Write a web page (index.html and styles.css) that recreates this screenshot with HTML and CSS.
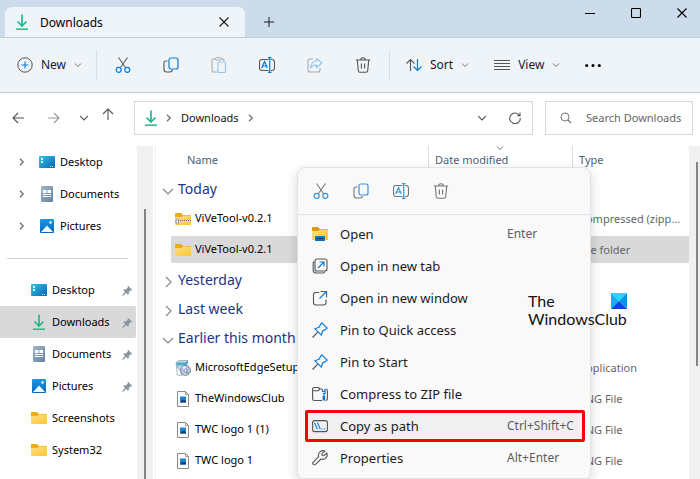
FILE: index.html
```html
<!DOCTYPE html>
<html lang="en">
<head>
<meta charset="utf-8">
<meta name="viewport" content="width=device-width, initial-scale=1">
<title>Downloads</title>
<link rel="stylesheet" href="styles.css">
</head>
<body>
<svg class="sprite" aria-hidden="true">
  <defs>
    <linearGradient id="g-desk" x1="0" y1="0" x2="1" y2="1"><stop offset="0" stop-color="#2cc9e2"/><stop offset="1" stop-color="#0a62bd"/></linearGradient>
    <linearGradient id="g-doc" x1="0" y1="0" x2="1" y2="1"><stop offset="0" stop-color="#a3b9cf"/><stop offset="1" stop-color="#647f9f"/></linearGradient>
    <linearGradient id="g-pic" x1="0" y1="0" x2="0" y2="1"><stop offset="0" stop-color="#1c97e5"/><stop offset="1" stop-color="#0767bd"/></linearGradient>
    <linearGradient id="g-fold" x1="0" y1="0" x2="1" y2="1"><stop offset="0" stop-color="#ffe08a"/><stop offset="1" stop-color="#fbc532"/></linearGradient>
    <symbol id="i-down" viewBox="0 0 16 16"><path d="M8 .5v11M3.500 7.500 8 12l4.500-4.500" fill="none" stroke="#22b78f" stroke-width="1.700"/><path d="M2 15.200h12" stroke="#2cc184" stroke-width="1.600"/></symbol>
    <symbol id="i-desktop" viewBox="0 0 16 16"><rect y="2" width="16" height="12" rx="1" fill="url(#g-desk)"/><path d="M2 4h2v2H2zM2 7h2v2H2z" fill="#e8fbff"/><path d="M11 12.500h1M13 12.500h1" stroke="#bfe6ff"/></symbol>
    <symbol id="i-doc" viewBox="0 0 16 16"><rect x="2" y="0" width="12" height="16" rx="1" fill="url(#g-doc)"/><path d="M4 4h3.500v3H4zM8.500 4H12v3H8.500zM4 8h8v1H4zM4 10h8v1H4z" fill="#fff"/></symbol>
    <symbol id="i-pic" viewBox="0 0 16 16"><rect x="1" y="1" width="14" height="14" rx="1" fill="url(#g-pic)"/><path d="M2 14 8 7.500l6 6.500z" fill="#f3faff"/><circle cx="11.500" cy="4.500" r="1.300" fill="#e8f6ff"/></symbol>
    <symbol id="i-folder" viewBox="0 0 16 16"><path d="M0 3q0-1 1-1h5l2 2h7q1 0 1 1v3H0z" fill="#eeac14"/><path d="M0 6h6.500l1.500-1.500h7q1 0 1 1V13q0 1-1 1H1q-1 0-1-1z" fill="url(#g-fold)"/></symbol>
    <symbol id="i-zip" viewBox="0 0 16 16"><use href="#i-folder"/><path d="M3 9.500h13" stroke="#636b70" stroke-width="1" stroke-dasharray="1 1"/><path d="M4 10.500h12" stroke="#dfe3e4" stroke-width="1" stroke-dasharray="1 1"/><rect x="1" y="8" width="2.500" height="5" rx="1" fill="#e4e7e8" stroke="#888" stroke-width=".8"/></symbol>
    <symbol id="i-open" viewBox="0 0 16 16"><path d="M0 2q0-1 1-1h5l2 2h7q1 0 1 1v3H0z" fill="#d99a0c"/><path d="M0 5h6.500L8 3.500h7q1 0 1 1V14H0z" fill="url(#g-fold)"/><path d="M3 15v-4q0-1 1-1h8q1 0 1 1v4z" fill="#0874c9"/><path d="M5 12.500h6" stroke="#053b72"/></symbol>
    <symbol id="i-png" viewBox="0 0 16 16"><path d="M2.500.5h8l3 3v12h-11z" fill="#fbfbfb" stroke="#8b8b8b"/><path d="M10.500.5v3h3" fill="none" stroke="#999"/><path d="M5 5.500h6v6H5z" fill="#2185cc"/><path d="m5 11.500 2.500-3 1 1 1-1 1.500 1.500v1.500z" fill="#113e75"/></symbol>
    <symbol id="i-setup" viewBox="0 0 16 16"><path d="M1 2.500 4 .5h9l-2 5.500L7 15 2.500 12z" fill="#c9d8e1" stroke="#7793a6" stroke-width=".6"/><path d="M1 2.500h9l3-2v3l-2 2H2z" fill="#4aaed0"/><path d="M2 6v9l5 .5-1-4z" fill="#f3f5f6" stroke="#788" stroke-width=".5"/><circle cx="10.500" cy="10.500" r="5" fill="#bec3e6" stroke="#5b6478" stroke-width=".7"/><path d="M10.500 10.500 7 7l3.500-1zM10.500 10.500l4 3-4 2z" fill="#f6f6ff"/><path d="m10.500 10.500 1 4.500 3-2z" fill="#69b772"/><circle cx="10.500" cy="10.500" r="1.500" fill="#fff" stroke="#5368bb" stroke-width=".8"/></symbol>
    <symbol id="i-pinned" viewBox="0 0 12 12"><path d="m6.800 1 4.200 4.200-.8.800-.8-.2-2 2 .1 1.800-1 1L4.600 8.800 1 12l-.9-.9L3.300 7.500 1.500 5.700l1-1 1.800.1 2-2-.3-1z" fill="#89959f"/></symbol>
    <symbol id="i-cut" viewBox="0 0 16 16"><path d="M3.500.5 10.800 11M12.500.5 5.200 11" fill="none" stroke="#5b5b5b" stroke-width="1.100"/><circle cx="3.700" cy="12.800" r="2.500" fill="none" stroke="#0a7bd5" stroke-width="1.200"/><circle cx="12.300" cy="12.800" r="2.500" fill="none" stroke="#0a7bd5" stroke-width="1.200"/></symbol>
    <symbol id="i-copy" viewBox="0 0 16 16"><path d="M4.500 4H3Q1 4 1 6v6.500Q1 15 3.500 15H7q2 0 2.500-2" fill="none" stroke="#555" stroke-width="1.100"/><rect x="6" y="1" width="9" height="11" rx="2" fill="none" stroke="#0a7bd5" stroke-width="1.200"/></symbol>
    <symbol id="i-paste" viewBox="0 0 16 16"><path d="M5 2H2.500Q1 2 1 3.500v10Q1 15 2.500 15H6M10 2h1.500Q13 2 13 3.500V4" fill="none" stroke="#aaa" stroke-width="1.100"/><rect x="4.500" y=".6" width="6" height="2.500" rx="1.200" fill="none" stroke="#aaa"/><rect x="7" y="5" width="7.500" height="10.500" rx="1" fill="none" stroke="#91c5ee" stroke-width="1.100"/></symbol>
    <symbol id="i-rename" viewBox="0 0 16 16"><path d="M9.500 2.500H3Q.5 2.500.5 5v6q0 2.500 2.500 2.500h6.500M12 2.500h1q2.500 0 2.500 2.500v6q0 2.500-2.500 2.500h-1" fill="none" stroke="#555" stroke-width="1.100"/><path d="M10.700.6v14.800M9 .6h3.500M9 15.400h3.500" stroke="#0a7bd5" stroke-width="1.200"/><path d="m2.700 11 2.800-6.500L8.300 11M3.700 9h3.600" fill="none" stroke="#0a7bd5" stroke-width="1.200"/></symbol>
    <symbol id="i-share" viewBox="0 0 16 16"><path d="M6 2H3Q1 2 1 4v9q0 2 2 2h8q2 0 2-2v-2" fill="none" stroke="#aaa" stroke-width="1.100"/><path d="m9.500 1.500 5.500 4.500-5.500 4.500V8Q6 7.500 3.500 11 4 4.500 9.500 4z" fill="none" stroke="#91c5ee" stroke-width="1.100" stroke-linejoin="round"/></symbol>
    <symbol id="i-trash" viewBox="0 0 16 16"><path d="M.8 3h14.400M5.700 3Q5.700.8 8 .8T10.300 3M2.300 3.300l1 10.400q.1 1.600 1.700 1.600h6q1.600 0 1.700-1.600l1-10.400M6.400 6.500v5M9.600 6.500v5" fill="none" stroke="#555" stroke-width="1.100"/></symbol>
    <symbol id="i-new" viewBox="0 0 16 16"><circle cx="8" cy="8" r="7.200" fill="none" stroke="#555"/><path d="M8 4.500v7M4.500 8h7" stroke="#0a7bd5" stroke-width="1.100"/></symbol>
    <symbol id="i-sort" viewBox="0 0 16 16"><path d="M4.500 14V2.500M.5 6.500l4-4 4 4" fill="none" stroke="#555" stroke-width="1.100"/><path d="M11.500 2v11.500m-4-4 4 4 4-4" fill="none" stroke="#0a7bd5" stroke-width="1.200"/></symbol>
    <symbol id="i-view" viewBox="0 0 16 16"><path d="M0 3.500h16M0 6.500h16M0 9.500h16M0 12.500h16" stroke="#555"/></symbol>
    <symbol id="i-more" viewBox="0 0 16 16"><circle cx="1.700" cy="8.500" r="1.500"/><circle cx="8" cy="8.500" r="1.500"/><circle cx="14.300" cy="8.500" r="1.500"/></symbol>
    <symbol id="i-chev" viewBox="0 0 8 8"><path d="m1 2.500 3 3 3-3" fill="none" stroke="currentColor"/></symbol>
    <symbol id="i-group" viewBox="0 0 14 14"><path d="m2 5 5 5 5-5" fill="none" stroke="currentColor" stroke-width="1.200"/></symbol>
    <symbol id="i-right" viewBox="0 0 8 8"><path d="m2 .8 3.200 3.200L2 7.200" fill="none" stroke="currentColor" stroke-width="1.400"/></symbol>
    <symbol id="i-close" viewBox="0 0 10 10"><path d="m.5.5 9 9m0-9-9 9" stroke="currentColor" stroke-width="1.100"/></symbol>
    <symbol id="i-plus" viewBox="0 0 10 10"><path d="M5 0v10M0 5h10" stroke="currentColor"/></symbol>
    <symbol id="i-min" viewBox="0 0 10 10"><path d="M0 5.500h10" stroke="currentColor"/></symbol>
    <symbol id="i-max" viewBox="0 0 10 10"><rect x=".5" y=".5" width="9" height="9" rx="1" fill="none" stroke="currentColor" stroke-width="1.100"/></symbol>
    <symbol id="i-back" viewBox="0 0 12 12"><path d="M12 6H1m5-5L1 6l5 5" fill="none" stroke="currentColor" stroke-width="1.100"/></symbol>
    <symbol id="i-fwd" viewBox="0 0 12 12"><path d="M0 6h11M6 1l5 5-5 5" fill="none" stroke="currentColor" stroke-width="1.100"/></symbol>
    <symbol id="i-up" viewBox="0 0 12 12"><path d="M6 12V1M1 6l5-5 5 5" fill="none" stroke="currentColor" stroke-width="1.100"/></symbol>
    <symbol id="i-refresh" viewBox="0 0 12 12"><path d="M10.500 3.500A5.300 5.300 0 1 0 11.300 6M11 .5v3.200H7.800" fill="none" stroke="currentColor" stroke-width="1.100"/></symbol>
    <symbol id="i-search" viewBox="0 0 12 12"><circle cx="5" cy="5" r="4" fill="none" stroke="currentColor"/><path d="m8 8 3 3" stroke="currentColor" stroke-width="1.200"/></symbol>
    <symbol id="i-newtab" viewBox="0 0 16 16"><rect x="3" y="1" width="12" height="12" rx="2" fill="none" stroke="#555" stroke-width="1.100"/><path d="M2 3.500q-.8.700-.8 2V12q0 3 3 3h6.500q1.300 0 2-.8" fill="none" stroke="#555" stroke-width="1.100"/><path d="m6 10 6-6M7.500 4H12v4.500" fill="none" stroke="#0a7bd5" stroke-width="1.200"/></symbol>
    <symbol id="i-newwin" viewBox="0 0 16 16"><path d="M7 2.500H4q-2.500 0-2.500 2.500v7.500Q1.500 15 4 15h7.500q2.500 0 2.500-2.500v-3" fill="none" stroke="#555" stroke-width="1.100"/><path d="m7.500 8.500 7-7M8.500 1.500h6v6" fill="none" stroke="#0a7bd5" stroke-width="1.200"/></symbol>
    <symbol id="i-pin" viewBox="0 0 16 16"><path d="m9.800.8 5.400 5.400-1.500 1.200-3 1.500-1.400 4.300L2.800 6.700l4.300-1.400 1.500-3z" fill="none" stroke="#0a7bd5" stroke-width="1.200" stroke-linejoin="round"/><path d="M5.800 10.200.5 15.500" stroke="#555" stroke-width="1.200"/></symbol>
    <symbol id="i-compress" viewBox="0 0 16 16"><path d="M10 3H8L6.500 1.500H2.300Q.6 1.500.6 3.200v9.600q0 1.700 1.700 1.700H10M.6 4.800h5.600L8 3M13.500 3q1.900 0 1.900 1.900v7.900q0 1.700-1.900 1.700" fill="none" stroke="#555" stroke-width="1.100"/><path d="M10.500 3v2.500h2M13 3v4.500h-2M12 7.500V10" fill="none" stroke="#0a7bd5" stroke-width="1.200"/><rect x="10.600" y="10" width="2.600" height="4.500" fill="#0a7bd5"/></symbol>
    <symbol id="i-path" viewBox="0 0 16 16"><rect x=".6" y="2.600" width="14.800" height="11" rx="2" fill="none" stroke="#555" stroke-width="1.100"/><path d="m2.500 4.800 2.800 6.500m.2-6.500 2.800 6.500" stroke="#0a7bd5" stroke-width="1.100"/><path d="M9.500 11h1.200M12 11h1.200" stroke="#0a7bd5" stroke-width="1.200"/></symbol>
    <symbol id="i-wrench" viewBox="0 0 16 16"><path d="M13 1.200A4.500 4.500 0 0 0 6.700 6.700L1 12.400q-.8 1 .2 2 1 1 2.100.2L9 9A4.500 4.500 0 0 0 14.800 3l-2.700 2.700-2-.2-.1-1.800z" fill="none" stroke="#555" stroke-width="1.100" stroke-linejoin="round"/></symbol>
  </defs>
</svg>

<div class="window">
  <header class="titlebar">
    <div class="tab">
      <svg class="icon"><use href="#i-down"/></svg>
      <span class="tab-title">Downloads</span>
      <button class="plain" aria-label="Close tab"><svg class="icon-s"><use href="#i-close"/></svg></button>
    </div>
    <button class="plain add-tab" aria-label="New tab"><svg class="icon-s"><use href="#i-plus"/></svg></button>
    <div class="controls">
      <button class="plain" aria-label="Minimize"><svg class="icon-s"><use href="#i-min"/></svg></button>
      <button class="plain" aria-label="Maximize"><svg class="icon-s"><use href="#i-max"/></svg></button>
      <button class="plain" aria-label="Close"><svg class="icon-s"><use href="#i-close"/></svg></button>
    </div>
  </header>

  <div class="toolbar" role="toolbar">
    <button class="plain command first"><svg class="icon"><use href="#i-new"/></svg>New<svg class="chev"><use href="#i-chev"/></svg></button>
    <div class="tools">
      <button class="plain" aria-label="Cut"><svg class="icon"><use href="#i-cut"/></svg></button>
      <button class="plain" aria-label="Copy"><svg class="icon"><use href="#i-copy"/></svg></button>
      <button class="plain" aria-label="Paste"><svg class="icon"><use href="#i-paste"/></svg></button>
      <button class="plain" aria-label="Rename"><svg class="icon"><use href="#i-rename"/></svg></button>
      <button class="plain" aria-label="Share"><svg class="icon"><use href="#i-share"/></svg></button>
      <button class="plain" aria-label="Delete"><svg class="icon"><use href="#i-trash"/></svg></button>
    </div>
    <div class="options">
      <button class="plain command"><svg class="icon"><use href="#i-sort"/></svg>Sort<svg class="chev"><use href="#i-chev"/></svg></button>
      <button class="plain command"><svg class="icon"><use href="#i-view"/></svg>View<svg class="chev"><use href="#i-chev"/></svg></button>
      <button class="plain" aria-label="More"><svg class="icon"><use href="#i-more"/></svg></button>
    </div>
  </div>

  <div class="navbar">
    <div class="history">
      <button class="plain" aria-label="Back"><svg class="icon-m"><use href="#i-back"/></svg></button>
      <button class="plain dim" aria-label="Forward"><svg class="icon-m"><use href="#i-fwd"/></svg></button>
      <button class="plain narrow" aria-label="Recent locations"><svg class="icon-s"><use href="#i-chev"/></svg></button>
      <button class="plain narrow raised" aria-label="Up"><svg class="icon-m"><use href="#i-up"/></svg></button>
    </div>
    <nav class="address" aria-label="Address">
      <svg class="icon"><use href="#i-down"/></svg>
      <svg class="chev"><use href="#i-right"/></svg>
      <a href="#downloads">Downloads</a>
      <svg class="chev"><use href="#i-right"/></svg>
      <button class="plain push" aria-label="Previous locations"><svg class="icon-s"><use href="#i-chev"/></svg></button>
      <button class="plain" aria-label="Refresh"><svg class="icon-m"><use href="#i-refresh"/></svg></button>
    </nav>
    <label class="search">
      <svg class="icon-m"><use href="#i-search"/></svg>
      <input type="text" aria-label="Search Downloads" placeholder="Search Downloads">
    </label>
  </div>

  <div class="content">
    <nav class="sidebar" aria-label="Folders">
      <ul class="tree">
        <li><a href="#desktop"><svg class="chev"><use href="#i-right"/></svg><svg class="icon"><use href="#i-desktop"/></svg>Desktop</a></li>
        <li><a href="#documents"><svg class="chev"><use href="#i-right"/></svg><svg class="icon"><use href="#i-doc"/></svg>Documents</a></li>
        <li><a href="#pictures"><svg class="chev"><use href="#i-right"/></svg><svg class="icon"><use href="#i-pic"/></svg>Pictures</a></li>
      </ul>
      <hr>
      <ul class="quick">
        <li><a href="#desktop"><svg class="icon"><use href="#i-desktop"/></svg>Desktop<svg class="pin"><use href="#i-pinned"/></svg></a></li>
        <li><a href="#downloads" class="current"><svg class="icon"><use href="#i-down"/></svg>Downloads<svg class="pin"><use href="#i-pinned"/></svg></a></li>
        <li><a href="#documents"><svg class="icon"><use href="#i-doc"/></svg>Documents<svg class="pin"><use href="#i-pinned"/></svg></a></li>
        <li><a href="#pictures"><svg class="icon"><use href="#i-pic"/></svg>Pictures<svg class="pin"><use href="#i-pinned"/></svg></a></li>
        <li><a href="#screenshots"><svg class="icon"><use href="#i-folder"/></svg>Screenshots</a></li>
        <li><a href="#system32"><svg class="icon"><use href="#i-folder"/></svg>System32</a></li>
      </ul>
    </nav>
    <div class="scroll scroll-left"><div class="thumb"></div></div>
    <main class="files">
      <table>
        <colgroup><col class="c-edge"><col><col class="c-date"><col class="c-type"></colgroup>
        <thead><tr><th></th><th class="name">Name</th><th class="ruled"><span class="sorted">Date modified<svg class="chev sort-mark"><use href="#i-chev"/></svg></span></th><th class="ruled">Type</th></tr></thead>
        <tbody>
          <tr class="group"><th colspan="4"><svg class="icon-g"><use href="#i-group"/></svg>Today</th></tr>
          <tr><td></td><td><svg class="icon"><use href="#i-zip"/></svg>ViVeTool-v0.2.1</td><td></td><td>Compressed (zipp...</td></tr>
          <tr class="selected"><td></td><td><svg class="icon"><use href="#i-folder"/></svg>ViVeTool-v0.2.1</td><td></td><td>File folder</td></tr>
          <tr class="group"><th colspan="4"><svg class="icon-g shut"><use href="#i-group"/></svg>Yesterday</th></tr>
          <tr class="group"><th colspan="4"><svg class="icon-g shut"><use href="#i-group"/></svg>Last week</th></tr>
          <tr class="group"><th colspan="4"><svg class="icon-g"><use href="#i-group"/></svg>Earlier this month</th></tr>
          <tr><td></td><td><svg class="icon"><use href="#i-setup"/></svg>MicrosoftEdgeSetup</td><td></td><td>Application</td></tr>
          <tr><td></td><td><svg class="icon"><use href="#i-png"/></svg>TheWindowsClub</td><td></td><td>PNG File</td></tr>
          <tr><td></td><td><svg class="icon"><use href="#i-png"/></svg>TWC logo 1 (1)</td><td></td><td>PNG File</td></tr>
          <tr><td></td><td><svg class="icon"><use href="#i-png"/></svg>TWC logo 1</td><td></td><td>PNG File</td></tr>
        </tbody>
      </table>
    </main>
    <div class="scroll scroll-right"><div class="thumb"></div></div>
  </div>

  <div class="menu" role="menu">
    <div class="menu-icons">
      <button class="plain" aria-label="Cut"><svg class="icon"><use href="#i-cut"/></svg></button>
      <button class="plain" aria-label="Copy"><svg class="icon"><use href="#i-copy"/></svg></button>
      <button class="plain" aria-label="Rename"><svg class="icon"><use href="#i-rename"/></svg></button>
      <button class="plain" aria-label="Delete"><svg class="icon"><use href="#i-trash"/></svg></button>
    </div>
    <div class="menu-items">
      <button class="item" role="menuitem"><svg class="icon"><use href="#i-open"/></svg><span>Open</span><kbd>Enter</kbd></button>
      <button class="item" role="menuitem"><svg class="icon"><use href="#i-newtab"/></svg><span>Open in new tab</span></button>
      <button class="item" role="menuitem"><svg class="icon"><use href="#i-newwin"/></svg><span>Open in new window</span></button>
      <button class="item" role="menuitem"><svg class="icon"><use href="#i-pin"/></svg><span>Pin to Quick access</span></button>
      <button class="item" role="menuitem"><svg class="icon"><use href="#i-pin"/></svg><span>Pin to Start</span></button>
      <button class="item" role="menuitem"><svg class="icon"><use href="#i-compress"/></svg><span>Compress to ZIP file</span></button>
      <button class="item marked" role="menuitem"><svg class="icon"><use href="#i-path"/></svg><span>Copy as path</span><kbd>Ctrl+Shift+C</kbd></button>
      <button class="item" role="menuitem"><svg class="icon"><use href="#i-wrench"/></svg><span>Properties</span><kbd>Alt+Enter</kbd></button>
    </div>
  </div>

  <div class="watermark">
    <div class="watermark-top"><span>The</span>
      <svg class="logo" viewBox="0 0 16 16" aria-hidden="true"><path d="M0 0h16L8 8z" fill="#20d7fb"/><path d="M0 0v16l8-8z" fill="#08b4f4"/><path d="M16 0v16L8 8z" fill="#0792ec"/><path d="M0 16h16L8 8z" fill="#0b48d6"/></svg>
    </div>
    <span>WindowsClub</span>
  </div>
</div>
</body>
</html>
```

FILE: styles.css
```css
* { box-sizing: border-box; }

body {
  margin: 0;
  font: 12px/16px "Noto Sans", "Open Sans", sans-serif;
  color: #1b1b1b;
  background: #fff;
}

ul { list-style: none; margin: 0; padding: 0; }
a { color: inherit; text-decoration: none; }
svg { flex: none; display: block; }

.sprite { position: absolute; width: 0; height: 0; }
.icon { width: 16px; height: 16px; }
.icon-m { width: 12px; height: 12px; }
.icon-s { width: 10px; height: 10px; }
.icon-g { width: 14px; height: 14px; color: #888; }
.chev { width: 8px; height: 8px; color: #777; }
.pin { width: 11px; height: 11px; margin-left: auto; }

.plain {
  display: flex;
  align-items: center;
  justify-content: center;
  border: 0;
  padding: 0;
  background: none;
  color: inherit;
  font: inherit;
}

.window {
  position: relative;
  display: flex;
  flex-direction: column;
  height: 100vh;
  overflow: hidden;
}

/* Title bar */
.titlebar {
  display: flex;
  flex: none;
  height: 38px;
  padding: 7px 0 0 5px;
  background: #ccdceb;
  border-bottom: 1px solid #bccddc;
}
.tab {
  display: flex;
  align-items: center;
  width: 240px;
  padding: 0 16px 0 9px;
  background: #eff4f9;
  border-radius: 7px 7px 0 0;
}
.tab-title { flex: 1; margin-left: 10px; padding-top: 2px; color: #000; }
.add-tab { width: 48px; }
.controls { display: flex; height: 12px; margin-left: auto; color: #000; }
.controls .plain { width: 46px; }
.controls .plain:last-child { margin-right: -5px; }

/* Command bar */
.toolbar {
  display: flex;
  flex: none;
  align-items: center;
  height: 55px;
  background: #eff4f9;
  border-bottom: 1px solid #b9cbd8;
}
.command { gap: 8px; }
.first { width: 96px; padding-left: 3px; }
.tools {
  display: flex;
  height: 31px;
  padding: 0 2px;
  border: solid #d9dfe4;
  border-width: 0 1px;
}
.tools .plain { width: 48px; }
.options { display: flex; gap: 25px; padding-left: 16px; }

/* Navigation bar */
.navbar {
  display: flex;
  flex: none;
  align-items: center;
  height: 53px;
  padding: 0 7px 3px 0;
  font-size: 11px;
  color: #555;
}
.history { display: flex; width: 134px; }
.history .plain { width: 36px; height: 24px; }
.history .narrow { width: 24px; }
.history .raised { padding-bottom: 8px; }
.dim { color: #999; }
.address {
  display: flex;
  flex: 1;
  align-items: center;
  gap: 8px;
  height: 34px;
  padding: 0 11px 0 8px;
  border: 1px solid #d6d6d6;
}
.address .chev { margin: 0 -2px; }
.address a { margin: 0 2px; color: #111; }
.address .push { margin-left: auto; margin-right: 14px; }
.search {
  display: flex;
  align-items: center;
  width: 148px;
  height: 34px;
  margin-left: 12px;
  padding-left: 14px;
  color: #777;
  border: 1px solid #d6d6d6;
}
.search input {
  min-width: 0;
  flex: 1;
  margin-left: 14px;
  padding: 0;
  border: 0;
  outline: 0;
  background: none;
  font: inherit;
  color: #555;
}
.search input::placeholder { color: #666; opacity: 1; }

/* Folder pane */
.content { display: flex; flex: 1; min-height: 0; font-size: 11px; }
.sidebar { width: 137px; flex: none; color: #000; }
.sidebar a { display: flex; align-items: center; height: 32px; }
.tree a { padding-left: 18px; }
.tree .icon { margin: 0 5px 0 13px; }
.quick a { margin-right: 1px; padding: 0 3px 0 31px; }
.quick .icon { margin-right: 5px; }
.quick .current { background: #d9d9d9; border-radius: 0 2px 2px 0; }
.sidebar hr { margin: 16px 9px 15px 7px; border: 0; border-top: 1px solid #d2d2d2; }

.scroll { flex: none; background: #f0f0f0; }
.thumb { width: 2px; background: #858585; }
.scroll-left { width: 16px; padding: 63px 7px 0; }
.scroll-left .thumb { height: 100%; }
.scroll-right { width: 11px; padding: 16px 2px 0 7px; }
.scroll-right .thumb { height: 204px; }

/* File list */
.files { flex: 1; min-width: 0; margin-left: 2px; border-left: 1px solid #eee; }
table { width: 100%; table-layout: fixed; border-spacing: 0; }
.c-edge { width: 15px; }
.c-date { width: 144px; }
.c-type { width: 117px; }
th { padding: 0; font-weight: 400; text-align: left; }
thead tr { height: 28px; }
thead th { color: #4c607a; }
thead .name { padding-left: 16px; }
.ruled { padding-left: 6px; border-left: 1px solid #dedede; }
.sorted { position: relative; }
.sort-mark { position: absolute; left: 61px; top: -8px; }
.group { height: 29px; }
.group th { color: #1e3287; font-size: 14px; padding: 2px 0 0 5px; }
.group .icon-g, td .icon { display: inline-block; vertical-align: middle; }
.group .icon-g { margin-right: 3px; }
.shut { transform: rotate(-90deg); }
td {
  height: 31px;
  padding: 0 0 0 4px;
  border: solid transparent;
  border-width: 2px 0;
  background-clip: padding-box;
  white-space: nowrap;
  overflow: hidden;
  color: #000;
}
td .icon { margin-right: 4px; }
td:last-child { padding-left: 7px; color: #666; }
.selected td:not(:first-child) { background-color: #d9d9d9; }
.selected td:nth-child(2) { border-radius: 3px 0 0 3px; }

/* Context menu */
.menu {
  position: absolute;
  left: 297px;
  top: 167px;
  width: 294px;
  background: #f9f9f9;
  border: 1px solid #e3e3e3;
  border-radius: 8px;
  box-shadow: 0 4px 12px rgba(0, 0, 0, .16);
}
.menu-icons {
  display: flex;
  height: 47px;
  padding-left: 3px;
  border-bottom: 1px solid #e3e3e3;
}
.menu-icons .plain { width: 40px; opacity: .8; }
.menu-items { padding: 3px 5px 4px 7px; border-bottom: 1px solid #e3e3e3; }
.item {
  display: flex;
  align-items: center;
  width: 100%;
  height: 32px;
  padding: 0 9px 0 7px;
  border: 0;
  background: none;
  font: inherit;
  font-size: 13px;
  color: #1b1b1b;
  text-align: left;
}
.item span { flex: 1; margin-left: 12px; }
.item kbd { width: 69px; font: inherit; font-size: 12px; color: #5c5c5c; white-space: nowrap; }
.marked { background: #f0f0f0; outline: 3px solid #f90006; outline-offset: -3px; border-radius: 2px; }

/* Watermark */
.watermark {
  position: absolute;
  left: 528px;
  top: 292px;
  font: 16px/18px Lato, "Open Sans", sans-serif;
  color: #111;
}
.watermark-top { display: flex; align-items: center; justify-content: space-between; }
.logo { width: 16px; height: 16px; }
```
